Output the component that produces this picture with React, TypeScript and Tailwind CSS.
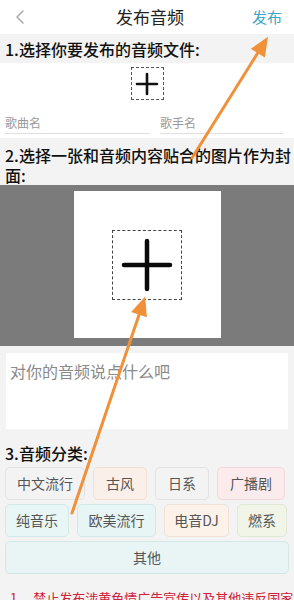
import { ChevronLeft } from "lucide-react";

const ROWS: { label: string; w: string; tone: string }[][] = [
  [
    { label: "中文流行", w: "w-[80px]", tone: "bg-[#f3f3f3] border-[#e2e2e2]" },
    { label: "古风", w: "w-[54px]", tone: "bg-[#fbefe9] border-[#f1dfd6]" },
    { label: "日系", w: "w-[54px]", tone: "bg-[#f3f3f4] border-[#e2e2e4]" },
    { label: "广播剧", w: "w-[68px]", tone: "bg-[#fcebed] border-[#f2d8dc]" },
  ],
  [
    { label: "纯音乐", w: "w-[64px]", tone: "bg-[#e8f6f6] border-[#d2e9e9]" },
    { label: "欧美流行", w: "w-[79px]", tone: "bg-[#e8f5f5] border-[#d2e8e8]" },
    { label: "电音DJ", w: "w-[65px]", tone: "bg-[#fcf2ea] border-[#f0e2d6]" },
    { label: "燃系", w: "w-[50px]", tone: "bg-[#f0f5e8] border-[#dfe8d3]" },
  ],
];

export default function App() {
  return (
    <div
      className="relative w-[294px] h-[600px] overflow-hidden bg-[#f3f3f3] text-[#111]"
      style={{ fontFamily: '"Noto Sans CJK SC", "Noto Sans", sans-serif' }}
    >
      {/* Header */}
      <div className="h-[34px] bg-white flex items-center justify-between px-3">
        <ChevronLeft size={24} strokeWidth={1.5} className="text-[#aaa] -ml-1" />
        <span className="text-[17px] text-[#222] ml-4">发布音频</span>
        <span className="text-[15px] text-[#3ba5c2]">发布</span>
      </div>

      {/* Step 1 */}
      <div className="h-[29px] flex items-center px-[5px] text-[16px] font-medium leading-none">
        1.选择你要发布的音频文件:
      </div>
      <div className="bg-white h-[49px] flex justify-center pt-[4px]">
        <div className="w-[33px] h-[33px] border border-dashed border-[#555] flex items-center justify-center">
          <svg width="24" height="24" viewBox="0 0 24 24">
            <path d="M12 2v20M2 12h20" stroke="#111" strokeWidth="2.6" strokeLinecap="round" />
          </svg>
        </div>
      </div>
      <div className="bg-white h-[26px] flex gap-[10px] px-[5px]">
        <input
          placeholder="歌曲名"
          className="w-[145px] h-[22px] border-b border-[#e0e0e0] text-[12px] outline-none placeholder:text-[#9a9a9a] bg-transparent"
        />
        <input
          placeholder="歌手名"
          className="w-[123px] h-[22px] border-b border-[#e0e0e0] text-[12px] outline-none placeholder:text-[#9a9a9a] bg-transparent"
        />
      </div>

      {/* Step 2 */}
      <div className="pl-[5px] pt-[7px] text-[16px] font-medium leading-[20px]">
        2.选择一张和音频内容贴合的图片作为封面:
      </div>
      <div className="bg-[#7b7b7b] h-[161px] flex justify-center pt-[6px]">
        <div className="w-[147px] h-[147px] bg-white flex items-center justify-center">
          <div className="w-[70px] h-[70px] border border-dashed border-[#444] flex items-center justify-center">
            <svg width="56" height="56" viewBox="0 0 56 56">
              <path d="M28 4v48M5 28h46" stroke="#0a0a0a" strokeWidth="4.5" strokeLinecap="round" />
            </svg>
          </div>
        </div>
      </div>

      {/* Description */}
      <div className="px-[6px] pt-[7px]">
        <textarea
          placeholder="对你的音频说点什么吧"
          className="block w-full h-[76px] bg-white resize-none outline-none px-[4px] pt-[7px] text-[16px] leading-[22px] placeholder:text-[#8a8a8a]"
        />
      </div>

      {/* Step 3 */}
      <div className="px-[5px] pt-[13px] text-[16px] font-medium leading-[22px]">3.音频分类:</div>
      <div className="px-[5px] pt-[3px] flex flex-col gap-[4px]">
        {ROWS.map((row, i) => (
          <div key={i} className="flex gap-[8px]">
            {row.map((c) => (
              <div
                key={c.label}
                className={`${c.w} ${c.tone} h-[33px] border rounded-[5px] flex items-center justify-center text-[14px] text-[#555]`}
              >
                {c.label}
              </div>
            ))}
          </div>
        ))}
        <div className="h-[33px] bg-[#e8f5f4] border border-[#d3e8e6] rounded-[5px] flex items-center justify-center text-[14px] text-[#555]">
          其他
        </div>
      </div>

      <p className="pl-[10px] pt-[15px] text-[13px] text-[#d0203a] leading-[18px] whitespace-nowrap">
        1、 禁止发布涉黄色情广告宣传以及其他违反国家
      </p>

      {/* Annotation arrows */}
      <svg className="absolute inset-0 pointer-events-none" width="294" height="600" viewBox="0 0 294 600">
        <g stroke="#f0913a" strokeWidth="3" strokeLinecap="round" fill="#f0913a">
          <line x1="192" y1="158" x2="259" y2="51" />
          <polygon points="266,40 263.7,55.1 253.5,48.7" />
          <line x1="72" y1="513" x2="140" y2="312" />
          <polygon points="144,300 145.2,315.2 133.8,311.4" />
        </g>
      </svg>
    </div>
  );
}
